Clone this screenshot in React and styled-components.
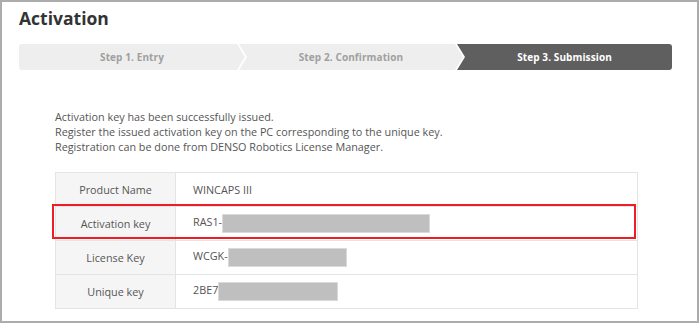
import * as React from 'react'
import styled, { createGlobalStyle } from 'styled-components'

const GlobalStyle = createGlobalStyle`
	html, body {
		margin: 0;
		padding: 0;
		background: #fff;
	}
	body {
		font-family: "Open Sans", "Liberation Sans", sans-serif;
	}
`

const steps = ['Step 1. Entry', 'Step 2. Confirmation', 'Step 3. Submission']

const rows = [
	{ label: 'Product Name', value: 'WINCAPS III' },
	{ label: 'Activation key', value: 'RAS1-', hidden: 208, highlight: true },
	{ label: 'License Key', value: 'WCGK-', hidden: 119 },
	{ label: 'Unique key', value: '2BE7', hidden: 120 },
]

const App = () =>
	<>
		<GlobalStyle/>
		<Frame>
			<Title>Activation</Title>
			<StepBar>
				{steps.map((s, i) =>
					<Step key={s} $pos={i} $active={i === steps.length - 1}>{s}</Step>
				)}
			</StepBar>
			<Content>
				<Message>
					Activation key has been successfully issued.<br/>
					Register the issued activation key on the PC corresponding to the unique key.<br/>
					Registration can be done from DENSO Robotics License Manager.
				</Message>
				<TableWrap>
					<Table>
						<tbody>
							{rows.map(r =>
								<tr key={r.label}>
									<Label>{r.label}</Label>
									<Value>
										{r.value}
										{r.hidden && <Redacted style={{ width: r.hidden }}/>}
									</Value>
								</tr>
							)}
						</tbody>
					</Table>
					<Highlight/>
				</TableWrap>
			</Content>
		</Frame>
	</>

export default App

const Frame = styled.div`
	box-sizing: border-box;
	width: 699px;
	height: 323px;
	border: 2px solid #acacac;
	padding: 4px 25px 0 17px;
	background: #fff;
`

const Title = styled.h1`
	margin: 0;
	font-size: 17.5px;
	line-height: 24px;
	font-weight: 700;
	color: #333;
`

const StepBar = styled.div`
	display: flex;
	height: 26px;
	margin-top: 14px;
	border-radius: 3px;
	overflow: hidden;
`

const clips = [
	'polygon(0 0, calc(100% - 8px) 0, 100% 50%, calc(100% - 8px) 100%, 0 100%)',
	'polygon(0 0, calc(100% - 8px) 0, 100% 50%, calc(100% - 8px) 100%, 0 100%, 8px 50%)',
	'polygon(0 0, 100% 0, 100% 100%, 0 100%, 8px 50%)',
]

const widths = ['0 0 226px', '0 0 224px', '1']

const Step = styled.div`
	flex: ${p => widths[p.$pos]};
	display: flex;
	align-items: center;
	justify-content: center;
	margin-left: ${p => p.$pos === 0 ? '0' : '-6px'};
	clip-path: ${p => clips[p.$pos]};
	background: ${p => p.$active ? '#5f5f5f' : '#eeeeee'};
	color: ${p => p.$active ? '#fff' : '#a0a0a0'};
	font-size: 10px;
	font-weight: 700;
	letter-spacing: 0.1px;
`

const Content = styled.div`
	margin: 39px 0 0 36px;
`

const Message = styled.p`
	margin: 0;
	font-size: 10.8px;
	line-height: 15px;
	color: #555;
`

const TableWrap = styled.div`
	position: relative;
	width: 583px;
	margin-top: 18px;
`

const Table = styled.table`
	width: 100%;
	border-collapse: collapse;
	border: 1px solid #e4e4e4;
	font-size: 10.8px;
	color: #555;

	td {
		border: 1px solid #e4e4e4;
		height: 33px;
		padding: 0;
	}
`

const Label = styled.td`
	width: 119px;
	background: #f5f5f5;
	text-align: center;
`

const Value = styled.td`
	padding-left: 17px !important;
`

const Redacted = styled.span`
	display: inline-block;
	vertical-align: middle;
	height: 19px;
	background: #bfbfbf;
	border: 1px solid #dadada;
	box-sizing: border-box;
`

const Highlight = styled.div`
	position: absolute;
	top: 32px;
	left: -3px;
	width: 584px;
	height: 35px;
	box-sizing: border-box;
	border: 2px solid #ee1c24;
	pointer-events: none;
`
